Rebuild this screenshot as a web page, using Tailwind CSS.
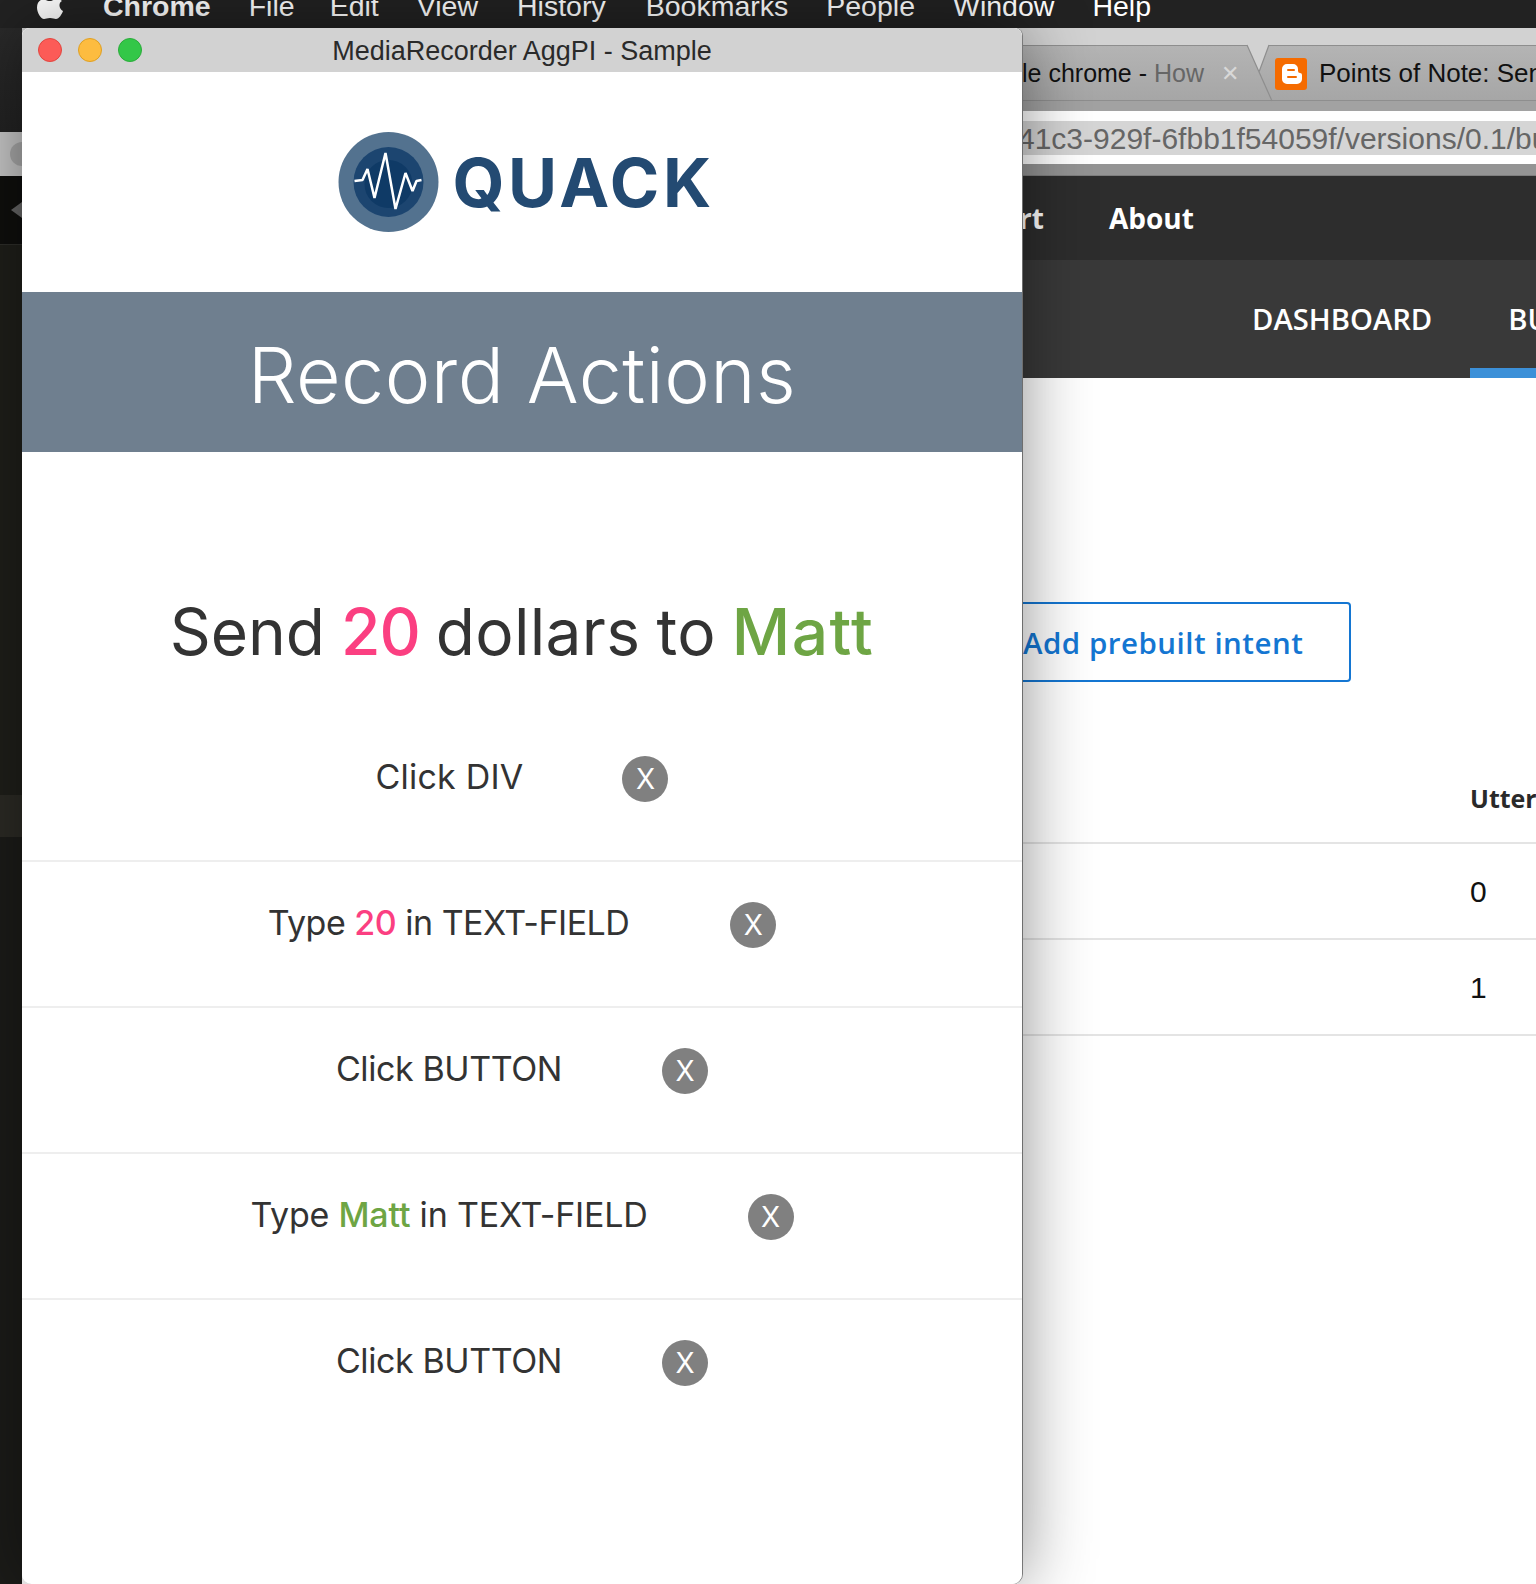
<!DOCTYPE html>
<html lang="en">
<head>
    <meta charset="UTF-8">
    <title>MediaRecorder AggPI - Sample</title>
    <script src="https://cdn.jsdelivr.net/npm/@tailwindcss/browser@4"></script>
</head>
<body class="bg-[#1f1f1b]">
<div class="relative w-[1536px] h-[1584px] overflow-hidden bg-white font-['Liberation_Sans',sans-serif]">

    <!-- mac menu bar -->
    <div class="h-[28px] bg-[#222222] overflow-hidden flex items-end pb-[8px] text-white text-[28.5px] leading-[28px] whitespace-nowrap">
        <svg class="ml-[37px] w-[26px] h-[25px] shrink-0 self-start -mt-[6px]" viewBox="0 0 26 25"><path fill="#fff" d="M13 7C10 7 8 5.500 6 5.500 2.500 5.500 0 9 0 13.500 0 19 4 25 7 25c2 0 3-1 6-1s4 1 6 1c3 0 6-5 7-8-4-2-5-8-1-10-2-2-5-2-7-1.500C16 6 15 7 13 7z"/></svg>
        <span class="ml-[40px] font-bold">Chrome</span>
        <span class="ml-[38px]">File</span>
        <span class="ml-[35px]">Edit</span>
        <span class="ml-[38px]">View</span>
        <span class="ml-[39px]">History</span>
        <span class="ml-[40px]">Bookmarks</span>
        <span class="ml-[38px]">People</span>
        <span class="ml-[38px]">Window</span>
        <span class="ml-[38px]">Help</span>
    </div>

    <!-- browser behind -->
    <div class="h-[17px] bg-[#d2d2d2]"></div>
    <div class="h-[56px] pt-[1px] bg-gradient-to-b from-[#b4b4b4] to-[#a6a6a6] border-y border-[#8e8e8e] flex items-center pl-[1022px] text-[25px] text-[#111] whitespace-nowrap overflow-hidden">
        <span>le chrome - <span class="text-[#666]">How</span></span>
        <span class="ml-[17px] text-[#d8d8d8] text-[22px]">✕</span>
        <div class="ml-[36px] w-[32px] h-[32px] rounded-[3px] bg-[#f56b00] flex items-center justify-center shrink-0">
            <svg class="w-[21px] h-[20px]" viewBox="0 0 21 20"><path fill="#fff" d="M6 0h6a5 5 0 0 1 5 5v2a2 2 0 0 0 2 2h0a2 2 0 0 1 2 2v4a5 5 0 0 1-5 5H6a5 5 0 0 1-5-5V5a5 5 0 0 1 5-5z"/><rect x="6" y="5" width="8" height="2" rx="1" fill="#f56b00"/><rect x="6" y="12" width="10" height="2" rx="1" fill="#f56b00"/></svg>
        </div>
        <span class="ml-[12px] text-[26px]">Points of Note: Send</span>
    </div>
    <div class="h-[10px] bg-[#a2a2a2]"></div>
    <div class="h-[53px] bg-white flex items-center pl-[1018px] overflow-hidden">
        <div class="h-[34px] w-full bg-[#d5d5d5] text-[#666] text-[30px] leading-[36px] whitespace-nowrap">41c3-929f-6fbb1f54059f/versions/0.1/build</div>
    </div>
    <div class="h-[12px] bg-[#949494] border-b border-[#7e7e7e]"></div>
    <div class="h-[84px] bg-[#2d2d2d] flex items-center pl-[1019px] text-white text-[28px] font-bold font-['Open_Sans',sans-serif]">
        <span>rt</span><span class="ml-[65px]">About</span>
    </div>
    <div class="relative h-[118px] bg-[#393939] flex items-center pl-[1252px] pt-[2px] text-white text-[29.2px] font-semibold font-['Open_Sans',sans-serif] whitespace-nowrap overflow-hidden">
        <span>DASHBOARD</span><span class="ml-[76px]">BUILD</span>
        <div class="absolute left-[1470px] right-0 bottom-0 h-[10px] bg-[#3c90d8]"></div>
    </div>

    <!-- page behind -->
    <div class="pl-[1023px] font-['Open_Sans',sans-serif]">
        <div class="mt-[224px] w-[328px] h-[80px] pt-[3px] border-2 border-l-0 border-[#1476d2] rounded-r-[4px] flex items-center text-[#1476d2] text-[29.5px] font-semibold tracking-[0.5px] whitespace-nowrap">Add prebuilt intent</div>
        <div class="mt-[92px] h-[70px] pt-[6px] border-b-2 border-[#e4e4e4] pl-[447px] text-[25px] font-bold text-[#2a2a2a] overflow-hidden whitespace-nowrap">Utterances</div>
        <div class="h-[96px] border-b-2 border-[#e4e4e4] pl-[447px] flex items-center text-[30px] text-[#111] font-['Liberation_Sans',sans-serif]">0</div>
        <div class="h-[96px] border-b-2 border-[#e4e4e4] pl-[447px] flex items-center text-[30px] text-[#111] font-['Liberation_Sans',sans-serif]">1</div>
    </div>

    <!-- left strip showing behind the window -->
    <div class="absolute left-0 top-[28px] bottom-0 w-[22px] flex flex-col overflow-hidden">
        <div class="h-[104px] bg-gradient-to-b from-[#2a2a2a] to-[#232323]"></div>
        <div class="h-[44px] bg-[#c9c9c9] flex items-center pl-[10px]"><div class="w-[24px] h-[24px] rounded-full bg-[#aaaaaa] shrink-0"></div></div>
        <div class="h-[68px] bg-[#0f0f0d] flex items-center justify-end"><div class="w-0 h-0 border-y-[8px] border-y-transparent border-r-[11px] border-r-[#666666]"></div></div>
        <div class="h-[551px] bg-[#1f1f1a] border-t border-[#2e2e2a]"></div>
        <div class="h-[42px] bg-[#2c2b25]"></div>
        <div class="flex-1 bg-[#1c1c19]"></div>
    </div>

    <!-- notch between the two background tabs -->
    <svg class="absolute left-[1240px] top-[44px] w-[40px] h-[58px]" viewBox="0 0 40 58">
        <path d="M7 1L19 28 29 1z" fill="#d2d2d2"/>
        <path d="M7 1L32 57M19 28L29 1" fill="none" stroke="#8e8e8e" stroke-width="1.200"/>
    </svg>

    <!-- floating app window -->
    <div class="absolute left-[22px] top-[28px] w-[1000px] h-[1556px] rounded-t-[8px] rounded-b-[10px] bg-white shadow-[0_0_70px_rgba(0,0,0,0.45),1px_0_0_#8e8e8e]"></div>
    <div class="absolute left-[22px] top-[28px] w-[1000px] h-[1556px] bg-white rounded-t-[8px] rounded-b-[10px] overflow-hidden flex flex-col font-['Inter',sans-serif] text-[#333333]">
        <div class="relative h-[44px] pt-[2px] bg-[#d2d2d2] flex items-center justify-center shrink-0 text-[27px] text-[#2a2a2a] font-['Liberation_Sans',sans-serif]">
            <div class="absolute left-[16px] top-[10px] flex gap-[16px]">
                <div class="w-[24px] h-[24px] rounded-full bg-[#fc5b57] border border-[#e2463f]"></div>
                <div class="w-[24px] h-[24px] rounded-full bg-[#fdbc40] border border-[#dfa023]"></div>
                <div class="w-[24px] h-[24px] rounded-full bg-[#33c748] border border-[#2aac3a]"></div>
            </div>
            MediaRecorder AggPI - Sample
        </div>
        <div class="h-[220px] flex items-center justify-center gap-[13px] pl-[9px] shrink-0">
            <svg class="w-[101px] h-[100px]" viewBox="0 0 100 100">
                <circle cx="50" cy="50" r="50" fill="#53728f"/>
                <circle cx="50" cy="50" r="35" fill="#1c4570"/>
                <circle cx="50" cy="52" r="24" fill="#0f3a66"/>
                <path d="M16 49l8-1 5-11 7 29 11-45 10 56 10-36 7 18 4-10 5-1" fill="none" stroke="#fff" stroke-width="2.500" stroke-linejoin="bevel"/>
            </svg>
            <span class="text-[67px] font-bold tracking-[3.5px] text-[#234a72] leading-none">QUACK</span>
        </div>
        <div class="h-[160px] pt-[8px] bg-[#6f7f8f] flex items-center justify-center shrink-0 text-white text-[77px] font-light tracking-[0.5px]">Record Actions</div>
        <div class="h-[264px] pt-[96px] flex items-center justify-center shrink-0 text-[64px] whitespace-nowrap">
            <span class="[word-spacing:-2px]"><span>Send</span> <span class="text-[#fb3f81] font-medium tracking-[-1px]">20</span> <span class="tracking-[0.3px]">dollars to</span> <span class="text-[#6ea544] font-medium tracking-[1.5px]">Matt</span></span>
        </div>
        <div class="h-[146px] border-b-2 border-[#eeeeee] flex items-start justify-center pt-[40px] shrink-0">
            <span class="text-[34px] leading-[42px] tracking-[0.2px] whitespace-nowrap">Click DIV</span>
            <span class="ml-[99px] w-[46px] h-[46px] rounded-full bg-[#808080] text-white text-[28px] flex items-center justify-center">X</span>
        </div>
        <div class="h-[146px] border-b-2 border-[#eeeeee] flex items-start justify-center pt-[40px] shrink-0">
            <span class="text-[34px] leading-[42px] tracking-[-0.5px] whitespace-nowrap">Type <span class="text-[#fb3f81] font-medium">20</span> in TEXT-FIELD</span>
            <span class="ml-[101px] w-[46px] h-[46px] rounded-full bg-[#808080] text-white text-[28px] flex items-center justify-center">X</span>
        </div>
        <div class="h-[146px] border-b-2 border-[#eeeeee] flex items-start justify-center pt-[40px] shrink-0">
            <span class="text-[34px] leading-[42px] tracking-[-0.4px] whitespace-nowrap">Click BUTTON</span>
            <span class="ml-[100px] w-[46px] h-[46px] rounded-full bg-[#808080] text-white text-[28px] flex items-center justify-center">X</span>
        </div>
        <div class="h-[146px] border-b-2 border-[#eeeeee] flex items-start justify-center pt-[40px] shrink-0">
            <span class="text-[34px] leading-[42px] tracking-[-0.2px] whitespace-nowrap">Type <span class="text-[#6ea544] font-medium">Matt</span> in TEXT-FIELD</span>
            <span class="ml-[100px] w-[46px] h-[46px] rounded-full bg-[#808080] text-white text-[28px] flex items-center justify-center">X</span>
        </div>
        <div class="h-[146px] flex items-start justify-center pt-[40px] shrink-0">
            <span class="text-[34px] leading-[42px] tracking-[-0.4px] whitespace-nowrap">Click BUTTON</span>
            <span class="ml-[100px] w-[46px] h-[46px] rounded-full bg-[#808080] text-white text-[28px] flex items-center justify-center">X</span>
        </div>
    </div>
</div>
</body>
</html>
